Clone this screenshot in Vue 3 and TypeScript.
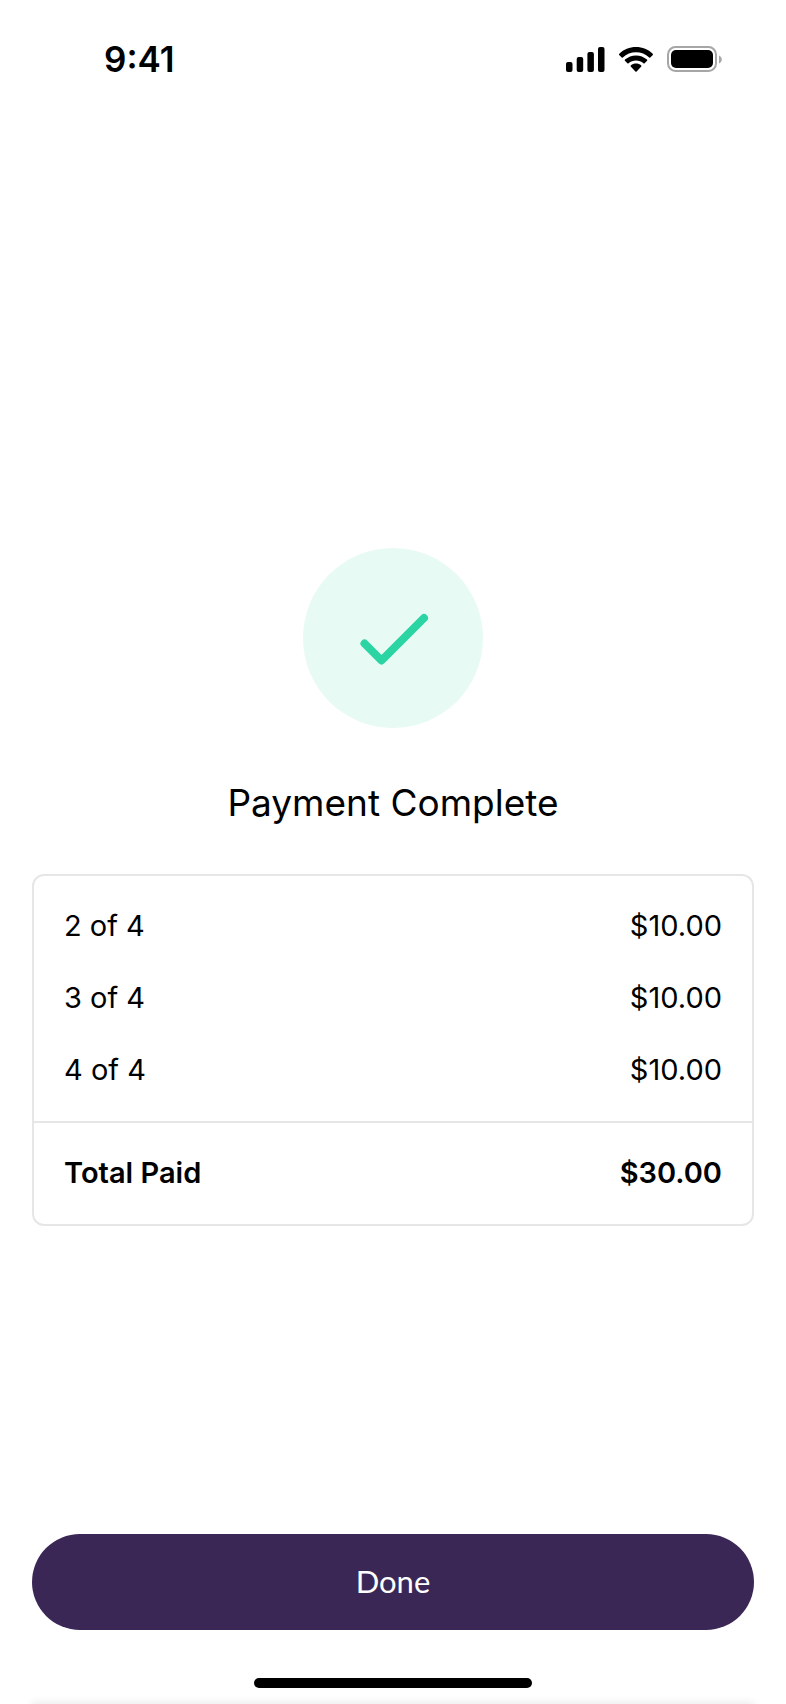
<script setup lang="ts">
interface Installment {
  label: string
  amount: number
}

const installments: Installment[] = [
  { label: '2 of 4', amount: 10 },
  { label: '3 of 4', amount: 10 },
  { label: '4 of 4', amount: 10 },
]

const total = installments.reduce((sum, item) => sum + item.amount, 0)
const money = (value: number): string => `$${value.toFixed(2)}`
</script>

<template>
  <div class="screen">
    <header class="status">
      <time class="clock">9:41</time>
      <div class="indicators">
        <svg class="signal" viewBox="0 0 39 25" aria-hidden="true">
          <rect x="0" y="15" width="6.5" height="10" rx="2" />
          <rect x="10.7" y="10" width="6.5" height="15" rx="2" />
          <rect x="21.4" y="5" width="6.5" height="20" rx="2" />
          <rect x="32" y="0" width="6.5" height="25" rx="2" />
        </svg>
        <svg class="wifi" viewBox="0 0 34 25" aria-hidden="true">
          <path d="M17 0C23.4 0 29.3 2.4 33.7 6.7C34.1 7.1 34.1 7.6 33.8 7.9L31.3 10.4C31 10.7 30.5 10.7 30.2 10.4C26.6 7 22 5.2 17 5.2S7.4 7 3.8 10.4C3.5 10.7 3 10.7 2.7 10.4L.2 7.9C-.1 7.6-.1 7.1.3 6.7C4.7 2.4 10.6 0 17 0Z" />
          <path d="M17 8.4C21.1 8.4 25 9.9 28 12.6C28.4 13 28.4 13.5 28.1 13.8L25.6 16.3C25.3 16.6 24.8 16.6 24.4 16.3C22.4 14.5 19.8 13.5 17 13.5S11.6 14.5 9.6 16.3C9.2 16.6 8.7 16.6 8.4 16.3L5.9 13.8C5.6 13.5 5.6 13 6 12.6C9 9.9 12.9 8.4 17 8.4Z" />
          <path d="M17 16.6C18.9 16.6 20.7 17.2 22.2 18.4C22.6 18.7 22.6 19.3 22.3 19.6L17.6 24.4C17.2 24.8 16.8 24.8 16.4 24.4L11.7 19.6C11.4 19.3 11.4 18.7 11.8 18.4C13.3 17.2 15.1 16.6 17 16.6Z" />
        </svg>
        <svg class="battery" viewBox="0 0 55 26" aria-hidden="true">
          <rect x="1" y="1" width="48" height="24" rx="7.5" fill="none" stroke="#a6a6a6" stroke-width="2" />
          <rect x="4" y="4" width="42" height="18" rx="5" />
          <path d="M52 9.5C55.7 11 55.7 16 52 17.5Z" fill="#a6a6a6" />
        </svg>
      </div>
    </header>

    <main class="content">
      <svg class="badge" viewBox="0 0 180 180" role="img" aria-label="Success">
        <circle cx="90" cy="90" r="90" fill="#e8faf4" />
        <path d="M61.500 95.5L78.500 112.500L121 70" fill="none" stroke="#2ad4a3" stroke-width="8" stroke-linecap="round" stroke-linejoin="round" />
      </svg>
      <h1 class="title">Payment Complete</h1>
      <table class="summary">
        <tbody>
          <tr v-for="item in installments" :key="item.label">
            <th scope="row">{{ item.label }}</th>
            <td>{{ money(item.amount) }}</td>
          </tr>
        </tbody>
        <tfoot>
          <tr>
            <th scope="row">Total Paid</th>
            <td>{{ money(total) }}</td>
          </tr>
        </tfoot>
      </table>
    </main>

    <footer class="actions">
      <button class="done" type="button">Done</button>
      <div class="home-bar"></div>
    </footer>
    <div class="sheet-edge"></div>
  </div>
</template>

<style>
body {
  margin: 0;
  background: #fff;
}
</style>

<style scoped>
.screen {
  box-sizing: border-box;
  display: flex;
  flex-direction: column;
  min-height: 100vh;
  position: relative;
  overflow: hidden;
  background: #fff;
  color: #000;
  font-family: Inter, "Liberation Sans", sans-serif;
}

.status {
  display: flex;
  align-items: center;
  justify-content: space-between;
  padding: 38px 64px 38px 104px;
}

.clock {
  font-size: 35px;
  line-height: 42px;
  font-weight: 600;
}

.indicators {
  display: flex;
  align-items: center;
  gap: 14px;
}

.signal {
  width: 39px;
  height: 25px;
}

.wifi {
  width: 34px;
  height: 25px;
}

.battery {
  width: 55px;
  height: 26px;
}

.content {
  flex: 1;
  display: flex;
  flex-direction: column;
  align-items: center;
  justify-content: center;
  gap: 48px;
  padding: 122px 32px 0;
}

.badge {
  width: 180px;
  height: 180px;
}

.title {
  margin: 0;
  padding-top: 4px;
  font-size: 37px;
  line-height: 46px;
  font-weight: 400;
}

.summary {
  width: 100%;
  border: 2px solid #e6e6e6;
  border-radius: 12px;
  border-spacing: 0;
  font-size: 29px;
  line-height: 36px;
}

.summary th,
.summary td {
  padding: 18px 30px;
  font-weight: 400;
  text-align: left;
}

.summary td {
  text-align: right;
}

.summary tbody tr:first-child > * {
  padding-top: 32px;
}

.summary tbody tr:last-child > * {
  padding-bottom: 33px;
}

.summary tfoot tr > * {
  padding-top: 32px;
  padding-bottom: 33px;
  border-top: 2px solid #e6e6e6;
  font-weight: 600;
}

.actions {
  display: flex;
  flex-direction: column;
  align-items: center;
  gap: 48px;
  padding: 0 32px 16px;
}

.done {
  width: 100%;
  height: 96px;
  padding: 0 0 2px;
  border: 0;
  border-radius: 48px;
  background: #3a2756;
  color: #fff;
  font-family: Lato, "Liberation Sans", sans-serif;
  font-size: 31px;
  line-height: 36px;
}

.home-bar {
  width: 278px;
  height: 10px;
  border-radius: 5px;
  background: #000;
}

/* Soft shadow cast by the sheet tucked under the bottom edge */
.sheet-edge {
  position: absolute;
  right: 32px;
  bottom: -4px;
  left: 32px;
  height: 4px;
  box-shadow: 0 0 8px rgba(0, 0, 0, 0.16);
}
</style>
